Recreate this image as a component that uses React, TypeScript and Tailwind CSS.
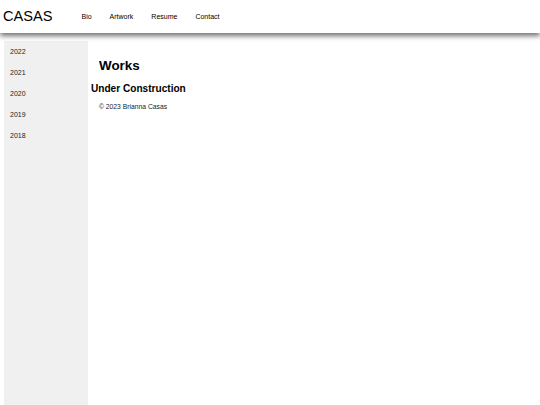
import React from 'react';

const navLinks = ['Bio', 'Artwork', 'Resume', 'Contact'];
const years = ['2022', '2021', '2020', '2019', '2018'];

export default function App() {
  return (
    <div
      className="flex h-screen w-full flex-col overflow-hidden bg-white text-black"
      style={{ fontFamily: '"Liberation Sans", Arial, sans-serif' }}
    >
      {/* Header */}
      <header className="relative z-10 flex h-[33px] shrink-0 items-center bg-white pl-[3px] shadow-[0_3px_5px_rgba(0,0,0,0.55)]">
        <span className="text-[14.6px] leading-none">CASAS</span>
        <nav className="ml-[29px] flex gap-[18px] text-[7px] leading-none">
          {navLinks.map((link) => (
            <a key={link} href="#" className="text-black">
              {link}
            </a>
          ))}
        </nav>
      </header>

      {/* Body */}
      <div className="flex flex-1 pt-[8px]">
        <aside className="ml-[4px] w-[84px] shrink-0 bg-[#f0f0f0] pl-[6px] pt-[1px]">
          {years.map((year) => (
            <div key={year} className="flex h-[21px] items-center text-[7px] text-[#222]">
              {year}
            </div>
          ))}
        </aside>

        <main className="flex flex-col pl-[3px] pt-[18px]">
          <h1 className="ml-[8px] text-[13.4px] font-bold leading-none">Works</h1>
          <h2 className="mt-[12px] text-[10.1px] font-bold leading-none">Under Construction</h2>
          <p className="ml-[8px] mt-[9px] text-[6.75px] leading-none text-[#222]">© 2023 Brianna Casas</p>
        </main>
      </div>
    </div>
  );
}
